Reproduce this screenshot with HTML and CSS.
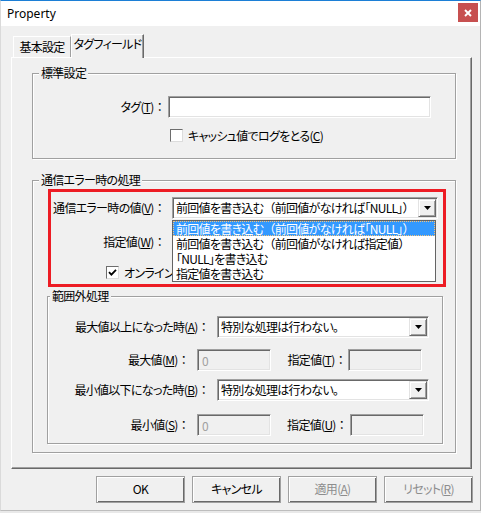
FILE: index.html
```html
<!DOCTYPE html>
<html lang="ja">
<head>
<meta charset="utf-8">
<title>Property</title>
<link rel="stylesheet" href="styles.css">
</head>
<body>
<div class="window">
  <div class="titlebar">
    <span class="title">Property</span>
    <span class="close"><svg width="8" height="8" viewBox="0 0 8 8"><path d="M1 1L7 7M7 1L1 7" stroke="#fff" stroke-width="1.9"/></svg></span>
  </div>
  <div class="client">
    <div class="tabs">
      <div class="tab tab-basic">基本設定</div>
      <div class="tab tab-active">タグフィールド</div>
    </div>
    <div class="panel">
      <div class="group g-std">
        <div class="gtitle">標準設定</div>
        <div class="row r-tag">
          <span class="lbl w-main">タグ(<u>T</u>)<span class="col">：</span></span>
          <div class="field tag-field"></div>
        </div>
        <div class="crow r-cache">
          <span class="cb"></span><span class="ctext">キャッシュ値でログをとる(<u>C</u>)</span>
        </div>
      </div>
      <div class="group g-err">
        <div class="gtitle">通信エラー時の処理</div>
        <div class="row r-v">
          <span class="lbl w-main">通信エラー時の値(<u>V</u>)<span class="col">：</span></span>
          <div class="combo err-combo">
            <span class="combo-text">前回値を書き込む<span class="np">（</span>前回値がなければ「NULL」<span class="np">）</span></span>
            <span class="arrow"><svg width="7" height="4" viewBox="0 0 7 4"><path d="M0 0H7L3.5 4Z" fill="#000"/></svg></span>
          </div>
        </div>
        <div class="row r-w">
          <span class="lbl w-main">指定値(<u>W</u>)<span class="col">：</span></span>
          <div class="field w-field"></div>
        </div>
        <div class="crow r-online">
          <span class="cb checked"><svg width="11" height="11" viewBox="0 0 11 11"><path d="M2 5.2L4.4 7.6L9 2.8" fill="none" stroke="#000" stroke-width="1.8"/></svg></span><span class="ctext">オンライン画面に反映する</span>
        </div>
        <div class="group g-range">
          <div class="gtitle">範囲外処理</div>
          <div class="row r-a">
            <span class="lbl w-when">最大値以上になった時(<u>A</u>)<span class="col">：</span></span>
            <div class="combo range-combo">
              <span class="combo-text">特別な処理は行わない。</span>
              <span class="arrow"><svg width="7" height="4" viewBox="0 0 7 4"><path d="M0 0H7L3.5 4Z" fill="#000"/></svg></span>
            </div>
          </div>
          <div class="row r-m">
            <span class="lbl w-val">最大値(<u>M</u>)<span class="col">：</span></span>
            <div class="field disabled small">0</div>
            <span class="lbl w-spec">指定値(<u>T</u>)<span class="col">：</span></span>
            <div class="field disabled small spec-t"></div>
          </div>
          <div class="row r-b">
            <span class="lbl w-when">最小値以下になった時(<u>B</u>)<span class="col">：</span></span>
            <div class="combo range-combo">
              <span class="combo-text">特別な処理は行わない。</span>
              <span class="arrow"><svg width="7" height="4" viewBox="0 0 7 4"><path d="M0 0H7L3.5 4Z" fill="#000"/></svg></span>
            </div>
          </div>
          <div class="row r-s">
            <span class="lbl w-val">最小値(<u>S</u>)<span class="col">：</span></span>
            <div class="field disabled small">0</div>
            <span class="lbl w-spec spec-u-lbl">指定値(<u>U</u>)<span class="col">：</span></span>
            <div class="field disabled small spec-u"></div>
          </div>
        </div>
      </div>
    </div>
    <div class="buttons">
      <div class="btn">OK</div>
      <div class="btn">キャンセル</div>
      <div class="btn off">適用(<u>A</u>)</div>
      <div class="btn off">リセット(<u>R</u>)</div>
    </div>
  </div>
  <div class="highlight"></div>
  <ul class="dropdown">
    <li class="sel">前回値を書き込む<span class="np">（</span>前回値がなければ「NULL」<span class="np">）</span></li>
    <li>前回値を書き込む<span class="np">（</span>前回値がなければ指定値<span class="np">）</span></li>
    <li>「NULL」を書き込む</li>
    <li>指定値を書き込む</li>
  </ul>
</div>
</body>
</html>
```
FILE: styles.css
```css
* { box-sizing: border-box; }
html, body { margin: 0; padding: 0; }
body {
  width: 481px;
  height: 513px;
  overflow: hidden;
  background: #e9e9e9;
  font-family: "Noto Sans CJK JP", "Noto Sans", sans-serif;
  font-size: 12px;
  line-height: 16px;
  letter-spacing: -0.7px;
  color: #000;
  font-feature-settings: "palt";
}
u { text-decoration: underline; text-underline-offset: 1px; }
.np, .col { font-feature-settings: normal; }

.window {
  position: relative;
  width: 481px;
  height: 511px;
  background: #f0f0f0;
  border-top: 1px solid #1c7fd6;
  border-left: 1px solid #dadada;
  border-right: 1px solid #b4b4b4;
  border-bottom: 1px solid #bdbdbd;
}

.titlebar {
  height: 25px;
  background: #fff;
  display: flex;
  justify-content: space-between;
  align-items: flex-start;
  padding-left: 6px;
}
.title {
  font-family: "Noto Sans", "Liberation Sans", sans-serif;
  font-size: 12px;
  line-height: 25px;
  letter-spacing: 0;
  font-feature-settings: normal;
}
.close {
  width: 20px;
  height: 19px;
  margin: 2px 2px 0 0;
  background: #c75050;
  display: flex;
  align-items: center;
  justify-content: center;
}

.client { padding: 8px 0 0 10px; }

.tabs {
  display: flex;
  align-items: flex-end;
  height: 23px;
  padding-left: 2px;
  position: relative;
  z-index: 1;
}
.tab {
  background: #f0f0f0;
  border-top: 1px solid #fff;
  border-left: 1px solid #fff;
  text-align: center;
  white-space: nowrap;
}
.tab-basic {
  width: 58px;
  height: 21px;
  padding-top: 2px;
  border-right: 1px solid #a0a0a0;
}
.tab-active {
  width: 73px;
  height: 24px;
  margin-bottom: -1px;
  padding-top: 1px;
  border-right: 1px solid #696969;
  box-shadow: inset -1px 0 0 #a0a0a0;
}

.panel {
  width: 461px;
  height: 412px;
  border-top: 1px solid #fff;
  border-left: 1px solid #fff;
  border-right: 1px solid #696969;
  border-bottom: 1px solid #696969;
  box-shadow: inset -1px -1px 0 #a0a0a0;
  padding: 0 15px 0 20px;
}

.group {
  border: 1px solid #a0a0a0;
  box-shadow: inset 1px 1px 0 #fff, 1px 1px 0 #fff;
}
.gtitle {
  width: fit-content;
  margin: -9px 0 0 6px;
  padding: 0 2px;
  background: #f0f0f0;
  line-height: 16px;
}

.g-std { margin-top: 15px; padding-bottom: 16px; }
.g-err { margin-top: 21px; }
.g-range { margin: 17px 12px 8px 14px; padding-bottom: 7px; }
.g-range .gtitle { margin-left: 2px; }

.row { display: flex; align-items: center; height: 22px; }
.lbl { display: block; text-align: right; white-space: nowrap; flex: none; }

.r-tag { margin-top: 15px; }
.w-main { width: 132px; }
.tag-field { margin-left: 3px; width: 263px; }

.crow { display: flex; align-items: center; height: 13px; }
.r-cache { margin: 11px 0 0 137px; }
.r-online { margin: 13px 0 0 73px; }
.ctext { margin-left: 5px; white-space: nowrap; }

.cb {
  width: 13px;
  height: 13px;
  flex: none;
  background: #fff;
  border: 1px solid;
  border-color: #6d6d6d #dcdcdc #dcdcdc #6d6d6d;
  display: flex;
  align-items: center;
  justify-content: center;
}

.field, .combo {
  height: 22px;
  background: #fff;
  border: 1px solid;
  border-color: #a0a0a0 #fff #fff #a0a0a0;
  box-shadow: inset 1px 1px 0 #696969, inset -1px -1px 0 #e3e3e3;
  flex: none;
}
.field.disabled {
  background: #f0f0f0;
  color: #a0a0a0;
  padding: 2px 0 0 4px;
  line-height: 17px;
}
.small { width: 74px; margin-left: 8px; }
.spec-t { margin-left: 2px; }
.spec-u { margin-left: 3px; }

.combo {
  display: flex;
  align-items: center;
  padding-left: 3px;
}
.combo-text { white-space: nowrap; overflow: hidden; }
.arrow {
  margin-left: auto;
  margin-right: 1px;
  width: 18px;
  height: 18px;
  flex: none;
  background: #f0f0f0;
  border: 1px solid;
  border-color: #e3e3e3 #696969 #696969 #e3e3e3;
  box-shadow: inset 1px 1px 0 #fff, inset -1px -1px 0 #a0a0a0;
  display: flex;
  align-items: center;
  justify-content: center;
}

.r-v { margin-top: 9px; }
.err-combo { margin-left: 7px; width: 266px; }
.r-w { margin-top: 12px; }
.w-field { margin-left: 7px; width: 120px; }

.r-a { margin-top: 12px; }
.w-when { width: 161px; }
.range-combo { margin-left: 8px; width: 212px; }
.r-m { margin-top: 11px; }
.w-val { width: 141px; }
.w-spec { width: 61px; margin-left: 14px; }
.spec-u-lbl { width: 62px; }
.r-b { margin-top: 8px; }
.r-s { margin-top: 13px; }

.buttons {
  display: flex;
  justify-content: flex-end;
  gap: 7px;
  width: 462px;
  margin-top: 7px;
}
.btn {
  width: 89px;
  height: 27px;
  border: 1px solid #a0a0a0;
  box-shadow: inset 1px 1px 0 #fff, inset -1px -1px 0 #696969;
  background: #f0f0f0;
  text-align: center;
  line-height: 24px;
}
.btn.off { color: #8d8d8d; }

.highlight {
  position: absolute;
  left: 47px;
  top: 188px;
  width: 398px;
  height: 98px;
  border: 3px solid #ed1c24;
}

.dropdown {
  position: absolute;
  left: 171px;
  top: 219px;
  width: 264px;
  height: 62px;
  margin: 0;
  padding: 0;
  list-style: none;
  background: #fff;
  border: 1px solid #646464;
}
.dropdown li {
  height: 15px;
  line-height: 15px;
  padding-left: 3px;
  white-space: nowrap;
}
.dropdown li.sel {
  background: #3399ff;
  color: #fff;
  outline: 1px dotted #f5c37a;
  outline-offset: -1px;
}
```
